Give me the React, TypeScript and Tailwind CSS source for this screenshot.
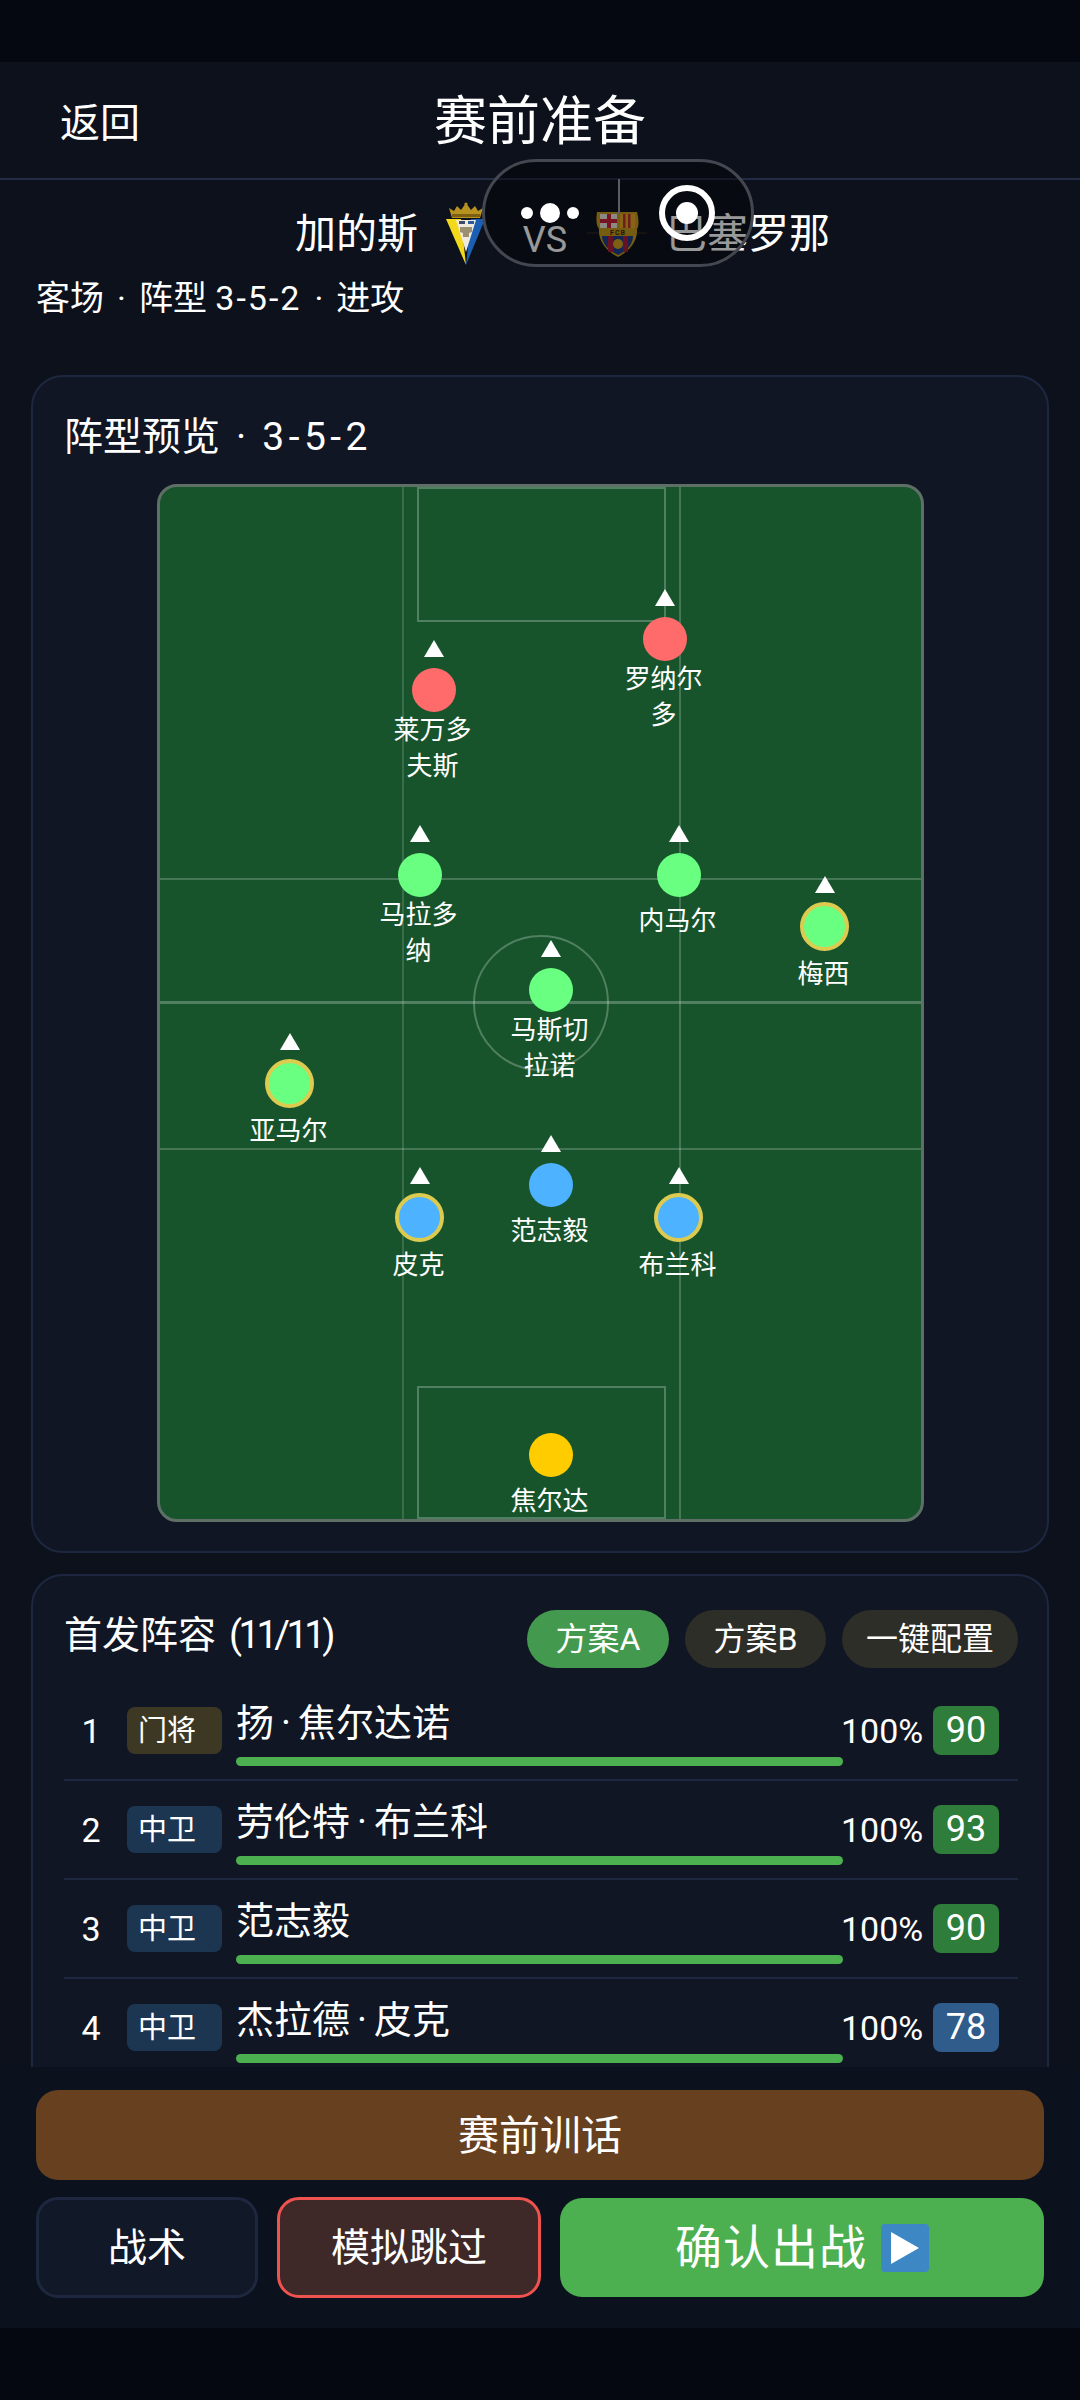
import React from "react";

const players = [
  { name: "罗纳尔多", color: "bg-[#ff6b6b]", pos: "left-[455px] top-[102px]", ring: false, multi: true },
  { name: "莱万多夫斯", color: "bg-[#ff6b6b]", pos: "left-[224px] top-[153px]", ring: false, multi: true },
  { name: "马拉多纳", color: "bg-[#69ff80]", pos: "left-[210px] top-[338px]", ring: false, multi: true },
  { name: "内马尔", color: "bg-[#69ff80]", pos: "left-[469px] top-[338px]", ring: false, multi: false },
  { name: "梅西", color: "bg-[#69ff80]", pos: "left-[615px] top-[389px]", ring: true, multi: false },
  { name: "马斯切拉诺", color: "bg-[#69ff80]", pos: "left-[341px] top-[453px]", ring: false, multi: true },
  { name: "亚马尔", color: "bg-[#69ff80]", pos: "left-[80px] top-[546px]", ring: true, multi: false },
  { name: "范志毅", color: "bg-[#4db2ff]", pos: "left-[341px] top-[648px]", ring: false, multi: false },
  { name: "皮克", color: "bg-[#4db2ff]", pos: "left-[210px] top-[680px]", ring: true, multi: false },
  { name: "布兰科", color: "bg-[#4db2ff]", pos: "left-[469px] top-[680px]", ring: true, multi: false },
  { name: "焦尔达", color: "bg-[#ffcc00]", pos: "left-[341px] top-[918px]", ring: false, multi: false, noArrow: true },
];

const rows = [
  { n: 1, tag: "门将", tagBg: "bg-[#3d3824]", first: "扬", last: "焦尔达诺", score: 90, scoreBg: "bg-[#2e7d3a]" },
  { n: 2, tag: "中卫", tagBg: "bg-[#1c3550]", first: "劳伦特", last: "布兰科", score: 93, scoreBg: "bg-[#2e7d3a]" },
  { n: 3, tag: "中卫", tagBg: "bg-[#1c3550]", first: "范志毅", last: "", score: 90, scoreBg: "bg-[#2e7d3a]" },
  { n: 4, tag: "中卫", tagBg: "bg-[#1c3550]", first: "杰拉德", last: "皮克", score: 78, scoreBg: "bg-[#2f5c8a]" },
];

function Cadiz() {
  return (
    <svg width="60" height="72" viewBox="0 0 60 72" className="shrink-0">
      <path d="M12 10l5 3 3-5 4 4 5-7 5 7 4-4 3 5 5-3-3 10H15z" fill="#b8921e" />
      <circle cx="29" cy="6" r="1.6" fill="#b8921e" />
      <rect x="15" y="16" width="28" height="3" fill="#7c5f12" />
      <path d="M9 21h15l5 46z" fill="#f4d81c" />
      <path d="M48 21H34l-5 46z" fill="#1a5fb4" />
      <path d="M19 22h20l-10 32z" fill="#efeadb" />
      <rect x="22" y="23" width="6" height="3" fill="#3f4a66" />
      <rect x="31" y="23" width="6" height="3" fill="#2a5aa0" />
      <path d="M23 29h12v5l-3 1v4h-6v-4l-3-1z" fill="#9a8f72" />
    </svg>
  );
}

function Barca() {
  return (
    <svg width="60" height="60" viewBox="0 0 60 60" className="shrink-0">
      <path d="M0 29h60" stroke="#3a3320" strokeWidth="1" />
      <path d="M10 8h40c2 8 2 14 0 17 1 12-8 23-19 28C20 48 11 37 12 25c-3-4-3-10-2-17z" fill="#c59a1c" />
      <rect x="13" y="10" width="17" height="14" fill="#e8e4dc" />
      <rect x="20" y="10" width="4" height="14" fill="#c8203a" />
      <rect x="13" y="15" width="17" height="4" fill="#c8203a" />
      <rect x="33" y="10" width="15" height="14" fill="#e0a526" />
      <rect x="36" y="10" width="2.5" height="14" fill="#b8342a" />
      <rect x="41" y="10" width="2.5" height="14" fill="#b8342a" />
      <text x="31" y="31" textAnchor="middle" fontSize="7" fontWeight="700" fill="#3a2a10" letterSpacing="1" fontFamily="Roboto, sans-serif">FCB</text>
      <path d="M15 32h31c0 8-6 15-15 19-9-4-16-11-16-19z" fill="#1f3f8a" />
      <rect x="21" y="32" width="5" height="16" fill="#a81f3d" />
      <rect x="36" y="32" width="5" height="16" fill="#a81f3d" />
      <circle cx="31" cy="40" r="5" fill="#d0a020" />
    </svg>
  );
}

function Player({ p }: { p: (typeof players)[number] }) {
  return (
    <div className={`absolute w-[100px] flex flex-col items-center ${p.pos}`}>
      <div className={`w-0 h-0 border-x-[10px] border-x-transparent border-b-[17px] ${p.noArrow ? "border-b-transparent" : "border-b-white"} ${p.ring ? "mb-[9px]" : "mb-[11px]"}`} />
      {p.ring ? (
        <div className={`w-[49px] h-[49px] rounded-full border-[4px] border-[#dccb4f] ${p.color}`} />
      ) : (
        <div className={`w-[44px] h-[44px] rounded-full ${p.color}`} />
      )}
      <div className={`w-[100px] pr-[2px] text-center text-white text-[26px] ${p.ring ? "mt-[5px] leading-[37px]" : p.multi ? "mt-0 leading-[36px]" : "mt-[6px] leading-[37px]"}`}>{p.name}</div>
    </div>
  );
}

export default function App() {
  return (
    <div className="relative w-[1080px] h-[2400px] overflow-hidden flex flex-col bg-[#0c111c] text-white font-normal font-['Roboto','Noto_Sans_CJK_SC',sans-serif]">
      <div className="h-[62px] bg-[#050811] shrink-0" />

      <header className="relative h-[118px] shrink-0 border-b-[2px] border-[#232c45] flex items-center justify-center">
        <span className="absolute left-[60px] top-[33px] text-[40px] leading-[58px]">返回</span>
        <h1 className="text-[53px] leading-[72px] font-normal mt-[4px]">赛前准备</h1>
      </header>

      <div className="shrink-0 h-[195px] flex flex-col">
        <div className="flex items-center pl-[295px] h-[86px] mt-[11px] text-[41px]">
          <span className="leading-[58px]">加的斯</span>
          <div className="ml-[19px]"><Cadiz /></div>
          <span className="ml-[18px] text-[36px] leading-[40px] mt-[12px] w-[60px] text-center">VS</span>
          <div className="ml-[12px]"><Barca /></div>
          <span className="ml-[19px] leading-[58px]">巴塞罗那</span>
        </div>
        <p className="pl-[36px] text-[34px] leading-[46px] -mt-[2px]">
          客场<span className="mx-[13px]">·</span>阵型 <span className="tracking-[2px]">3-5-2</span><span className="mx-[13px]">·</span>进攻
        </p>
      </div>

      <main className="h-[1692px] shrink-0 overflow-hidden px-[31px]">
        <section className="h-[1178px] rounded-[32px] border-[2px] border-[#1e2740] bg-[#101623] px-[31px]">
          <h2 className="text-[39px] leading-[54px] font-normal mt-[33px]">
            阵型预览<span className="mx-[16px]">·</span><span className="tracking-[4.5px]">3-5-2</span>
          </h2>
          <div className="relative mx-auto mt-[20px] w-[767px] h-[1038px] rounded-[20px] border-[3px] border-[#5e6f66] bg-[#17542c] overflow-hidden">
            <div className="absolute left-[242px] top-0 bottom-0 w-[2px] bg-white/15" />
            <div className="absolute left-[519px] top-0 bottom-0 w-[2px] bg-white/20" />
            <div className="absolute left-0 right-0 top-[391px] h-[2px] bg-white/20" />
            <div className="absolute left-0 right-0 top-[514px] h-[3px] bg-white/25" />
            <div className="absolute left-0 right-0 top-[661px] h-[2px] bg-white/20" />
            <div className="absolute left-[257px] top-0 w-[249px] h-[135px] border-[2px] border-white/25" />
            <div className="absolute left-[257px] top-[899px] w-[249px] bottom-0 border-[2px] border-white/25" />
            <div className="absolute left-[313px] top-[448px] w-[136px] h-[136px] rounded-full border-[2px] border-white/25" />
            {players.map((p) => (
              <Player key={p.name} p={p} />
            ))}
          </div>
        </section>

        <section className="mt-[21px] rounded-[32px] border-[2px] border-[#1e2740] bg-[#101623] pl-[31px] pr-[29px] h-[600px]">
          <div className="flex items-center justify-between pt-[34px]">
            <h2 className="text-[38px] leading-[54px] font-normal -mt-[8px]">
              首发阵容<span className="ml-[13px] tracking-[-3.5px]">(11/11)</span>
            </h2>
            <div className="flex gap-[16px]">
              <button className="w-[142px] h-[58px] rounded-full bg-[#43994d] text-[32px] leading-[58px]">方案A</button>
              <button className="w-[141px] h-[58px] rounded-full bg-[#2e2e28] text-[32px] leading-[58px]">方案B</button>
              <button className="w-[176px] h-[58px] rounded-full bg-[#2e2e28] text-[32px] leading-[58px]">一键配置</button>
            </div>
          </div>
          <div className="mt-[14px]">
            {rows.map((r) => (
              <div key={r.n} className="h-[99px] border-b-[2px] border-[#1e2740] flex items-center">
                <span className="w-[54px] mr-[9px] text-center text-[34px] leading-[46px]">{r.n}</span>
                <span className={`w-[95px] h-[47px] rounded-[8px] pl-[11px] text-[29px] leading-[49px] ${r.tagBg}`}>{r.tag}</span>
                <div className="ml-[14px] w-[607px] mt-[2px]">
                  <div className="text-[38px] leading-[50px]">
                    {r.first}
                    {r.last ? <span className="mx-[7px]">·</span> : null}
                    {r.last}
                  </div>
                  <div className="mt-[9px] h-[9px] rounded-full bg-[#4caf50]" />
                </div>
                <span className="-ml-[2px] w-[92px] text-[34px] leading-[46px]">100%</span>
                <span className={`w-[66px] h-[49px] rounded-[8px] text-center text-[36px] leading-[49px] ${r.scoreBg}`}>{r.score}</span>
              </div>
            ))}
          </div>
        </section>
      </main>

      <footer className="h-[261px] shrink-0 bg-[#0c121d] px-[36px] pt-[23px]">
        <button className="w-full h-[90px] rounded-[22px] bg-[#66401f] text-[41px] leading-[92px]">赛前训话</button>
        <div className="mt-[17px] flex gap-[19px] items-center">
          <button className="w-[222px] h-[101px] rounded-[22px] border-[3px] border-[#1e2740] bg-[#111827] text-[39px] pt-[2px]">战术</button>
          <button className="w-[264px] h-[101px] rounded-[22px] border-[3px] border-[#ef5350] bg-[#3e2828] text-[39px] pt-[2px]">模拟跳过</button>
          <button className="flex-1 h-[99px] rounded-[22px] bg-[#4caf50] flex items-center justify-center gap-[14px] text-[47px]">
            <span className="tracking-[1px] pt-[2px]">确认出战</span>
            <span className="w-[48px] h-[48px] rounded-[4px] bg-[#3d88c4] flex items-center justify-center">
              <svg width="30" height="34" viewBox="0 0 30 34"><path d="M1 1l28 16L1 33z" fill="#fff" /></svg>
            </span>
          </button>
        </div>
      </footer>

      <div className="flex-1 bg-[#050811]" />

      <div className="absolute left-[482px] top-[159px] w-[272px] h-[108px] rounded-full border-[3px] border-[#44474f] bg-black/40">
        <div className="absolute left-[133px] top-[17px] w-[2px] h-[35px] bg-[#5a5d64]" />
        <div className="absolute left-[36px] top-[45px] w-[12px] h-[12px] rounded-full bg-white" />
        <div className="absolute left-[55px] top-[41px] w-[20px] h-[20px] rounded-full bg-white" />
        <div className="absolute left-[82px] top-[45px] w-[12px] h-[12px] rounded-full bg-white" />
        <div className="absolute left-[174px] top-[23px] w-[56px] h-[56px] rounded-full border-[6px] border-white flex items-center justify-center">
          <div className="w-[22px] h-[22px] rounded-full bg-white" />
        </div>
      </div>
    </div>
  );
}
